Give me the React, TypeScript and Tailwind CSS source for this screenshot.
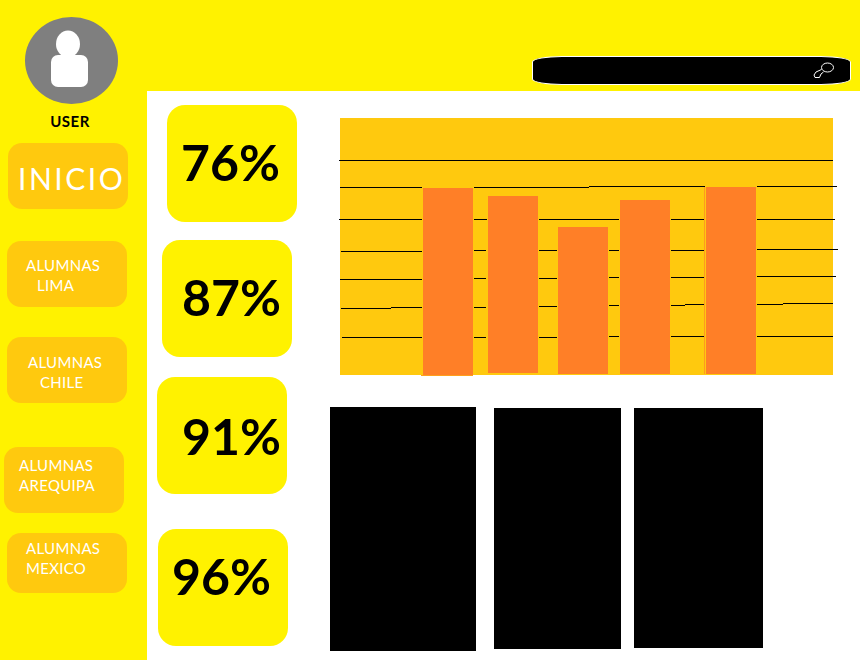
const font = "[font-family:'Lato','Liberation_Sans',sans-serif]";

const gridLines: [number, number, number][] = [
  [339, 833, 160],
  [340, 422, 187], [474, 589, 187], [589, 705, 186], [757, 837, 186],
  [339, 422, 219], [474, 487, 219], [539, 619, 219], [671, 705, 219], [757, 835, 219],
  [341, 422, 251], [474, 486, 250], [539, 557, 250], [609, 619, 250], [671, 705, 250], [757, 838, 249],
  [340, 422, 279], [474, 486, 278], [539, 557, 278], [609, 619, 277], [671, 705, 277], [757, 836, 276],
  [341, 391, 308], [391, 422, 307], [474, 486, 307], [539, 557, 306], [609, 619, 305], [671, 685, 305], [685, 705, 304], [757, 783, 304], [783, 833, 303],
  [342, 422, 337], [474, 486, 337], [539, 557, 337], [609, 619, 336], [671, 705, 336], [757, 833, 336],
];

const bars = [
  { x: 423, top: 188, bottom: 375 },
  { x: 488, top: 196, bottom: 373 },
  { x: 558, top: 227, bottom: 374 },
  { x: 620, top: 200, bottom: 374 },
  { x: 706, top: 187, bottom: 374 },
];

function Chart() {
  return (
    <svg width="500" height="260" viewBox="339 118 500 260" className="ml-[42px] mt-[27px] block" shapeRendering="crispEdges">
      <rect x="340" y="118" width="493" height="257" fill="#FFC90E" />
      {gridLines.map(([x1, x2, y], i) => (
        <rect key={i} x={x1} y={y} width={x2 - x1} height="1" fill="#000" />
      ))}
      <rect x="421" y="375" width="52" height="1" fill="#FFA01C" />
      <rect x="704" y="187" width="1" height="187" fill="#FF9A1F" />
      {bars.map((b) => (
        <rect key={b.x} x={b.x} y={b.top} width="50" height={b.bottom - b.top} fill="#FF7F27" />
      ))}
    </svg>
  );
}

function NavButton({ className, children }: { className: string; children: React.ReactNode }) {
  return (
    <div className={`w-[120px] bg-[#FFC90E] rounded-[14px] text-white text-[15px] leading-[20px] tracking-[0.3px] ${className}`}>
      {children}
    </div>
  );
}

function Stat({ className, children }: { className: string; children: React.ReactNode }) {
  return (
    <div className={`w-[130px] h-[117px] bg-[#FFF200] rounded-[18px] flex items-center text-black font-bold text-[50px] leading-none ${className}`}>
      {children}
    </div>
  );
}

export default function App() {
  return (
    <div className={`w-[860px] h-[660px] overflow-hidden flex bg-white ${font}`}>
      <aside className="w-[147px] h-full bg-[#FFF200] flex flex-col">
        <div className="w-[93px] h-[87px] mt-[17px] ml-[25px] rounded-[50%] bg-[#7F7F7F] flex items-center justify-center">
          <svg width="93" height="87" viewBox="25 17 93 87">
            <ellipse cx="68" cy="44" rx="12" ry="13.5" fill="#fff" />
            <rect x="51" y="55" width="37" height="32" rx="7" fill="#fff" />
          </svg>
        </div>
        <div className="mt-[7px] text-center text-black text-[15px] leading-5 font-bold tracking-[0.5px] ml-[-7px]">USER</div>
        <NavButton className="mt-[12px] ml-[8px] h-[66px] flex items-center pl-[10px] pt-[4px] !text-[30px] !tracking-[2.5px]">INICIO</NavButton>
        <NavButton className="mt-[32px] ml-[7px] h-[66px] pt-[14px]">
          <div className="pl-[19px]">ALUMNAS</div>
          <div className="pl-[30px]">LIMA</div>
        </NavButton>
        <NavButton className="mt-[30px] ml-[7px] h-[66px] pt-[15px]">
          <div className="pl-[21px]">ALUMNAS</div>
          <div className="pl-[33px]">CHILE</div>
        </NavButton>
        <NavButton className="mt-[44px] ml-[4px] h-[66px] pt-[8px] pl-[15px]">
          <div>ALUMNAS</div>
          <div>AREQUIPA</div>
        </NavButton>
        <NavButton className="mt-[20px] ml-[7px] h-[60px] pt-[5px] pl-[19px]">
          <div>ALUMNAS</div>
          <div>MEXICO</div>
        </NavButton>
      </aside>

      <div className="flex-1 flex flex-col">
        <header className="h-[91px] bg-[#FFF200] flex items-start">
          <div className="w-[319px] h-[29px] mt-[56px] ml-[385px] bg-black border border-white rounded-[30px/6px] flex items-center justify-end pr-[15px]">
            <svg width="22" height="17" viewBox="0 0 22 17" fill="none" stroke="#fff" strokeWidth="1">
              <ellipse cx="14.5" cy="5.5" rx="6" ry="4.5" />
              <path d="M8.5 7.5 L3 10 L1 13 L2 15.5 L6.5 15.5 L8 12 L10.5 10" />
            </svg>
          </div>
        </header>
        <main className="flex-1 flex">
          <div className="w-[150px] flex flex-col">
            <Stat className="mt-[14px] ml-[20px] pl-[14px] pb-[4px]">76%</Stat>
            <Stat className="mt-[18px] ml-[15px] pl-[20px] pb-[4px]">87%</Stat>
            <Stat className="mt-[20px] ml-[10px] pl-[25px]">91%</Stat>
            <Stat className="mt-[35px] ml-[11px] pl-[14px] pb-[24px]">96%</Stat>
          </div>
          <div className="flex-1 flex flex-col">
            <Chart />
            <div className="mt-[29px] ml-[33px] flex items-start">
              <div className="w-[146px] h-[244px] bg-black" />
              <div className="w-[127px] h-[241px] bg-black ml-[18px] mt-px" />
              <div className="w-[129px] h-[240px] bg-black ml-[13px] mt-px" />
            </div>
          </div>
        </main>
      </div>
    </div>
  );
}
